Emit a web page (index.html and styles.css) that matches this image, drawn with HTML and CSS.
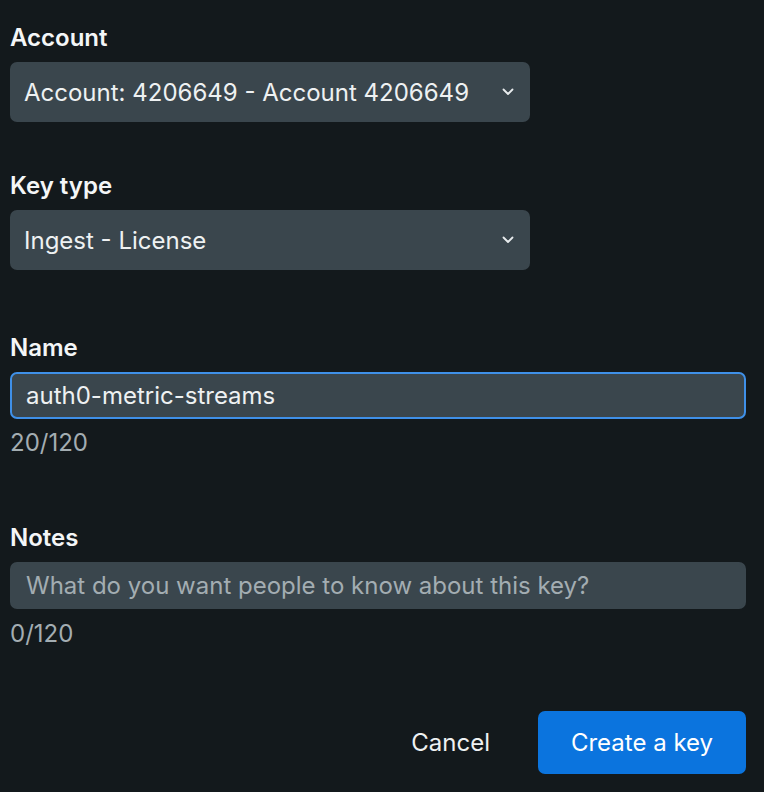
FILE: index.html
```html
<!DOCTYPE html>
<html>
<head>
<meta charset="utf-8">
<link rel="stylesheet" href="styles.css">
</head>
<body>
<form class="form">
  <div class="field field-select">
    <label class="label">Account</label>
    <div class="select">
      <span class="select-text">Account: 4206649 - Account 4206649</span>
      <svg class="chev" width="12" height="8" viewBox="0 0 12 8"><path d="M1.5 1.5 L6 6 L10.5 1.5" fill="none" stroke="#e8ecee" stroke-width="1.8" stroke-linecap="round" stroke-linejoin="round"/></svg>
    </div>
  </div>
  <div class="field field-select field-last-select">
    <label class="label">Key type</label>
    <div class="select">
      <span class="select-text">Ingest - License</span>
      <svg class="chev" width="12" height="8" viewBox="0 0 12 8"><path d="M1.5 1.5 L6 6 L10.5 1.5" fill="none" stroke="#e8ecee" stroke-width="1.8" stroke-linecap="round" stroke-linejoin="round"/></svg>
    </div>
  </div>
  <div class="field field-text">
    <label class="label">Name</label>
    <div class="input input-focus">auth0-metric-streams</div>
    <div class="count">20/120</div>
  </div>
  <div class="field field-text field-notes">
    <label class="label">Notes</label>
    <div class="input placeholder">What do you want people to know about this key?</div>
    <div class="count">0/120</div>
  </div>
  <div class="actions">
    <button type="button" class="btn-cancel">Cancel</button>
    <button type="button" class="btn-primary">Create a key</button>
  </div>
</form>
</body>
</html>
```

FILE: styles.css
```css
html, body {
  margin: 0;
  padding: 0;
  background: #13191c;
}
body {
  font-family: Inter, "Noto Sans", sans-serif;
  color: #eef1f2;
  width: 764px;
  height: 792px;
  overflow: hidden;
}
.form {
  padding: 23px 18px 0 10px;
  display: flex;
  flex-direction: column;
}
.field {
  display: flex;
  flex-direction: column;
}
.label {
  font-size: 24px;
  font-weight: 600;
  line-height: 30px;
  color: #f4f6f7;
  margin-bottom: 9px;
}
.select {
  width: 520px;
  height: 60px;
  box-sizing: border-box;
  background: #3a464d;
  border-radius: 7px;
  display: flex;
  align-items: center;
  justify-content: space-between;
  padding: 0 16px 0 14px;
}
.field-select {
  margin-bottom: 49px;
}
.field-last-select {
  margin-bottom: 63px;
}
.select-text {
  font-size: 24px;
  color: #eef1f2;
}
.chev {
  display: block;
}
.input {
  height: 47px;
  box-sizing: border-box;
  background: #3a464d;
  border: 2px solid #3a464d;
  border-radius: 7px;
  display: flex;
  align-items: center;
  padding: 0 14px;
  font-size: 24px;
  color: #eef1f2;
}
.input-focus {
  border-color: #3f90e8;
}
.placeholder {
  color: #a3adb2;
}
.count {
  font-size: 24px;
  color: #a3adb2;
  margin-top: 9px;
  line-height: 30px;
  margin-bottom: 65px;
}
.field-notes .count {
  margin-top: 10px;
  margin-bottom: 62px;
}
.actions {
  display: flex;
  justify-content: flex-end;
  align-items: center;
  gap: 48px;
}
.btn-cancel {
  background: none;
  border: none;
  font-family: inherit;
  font-size: 24px;
  color: #eef1f2;
  padding: 0;
}
.btn-primary {
  width: 208px;
  height: 63px;
  background: #0b74de;
  border: none;
  border-radius: 7px;
  font-family: inherit;
  font-size: 24px;
  color: #fff;
}
```
